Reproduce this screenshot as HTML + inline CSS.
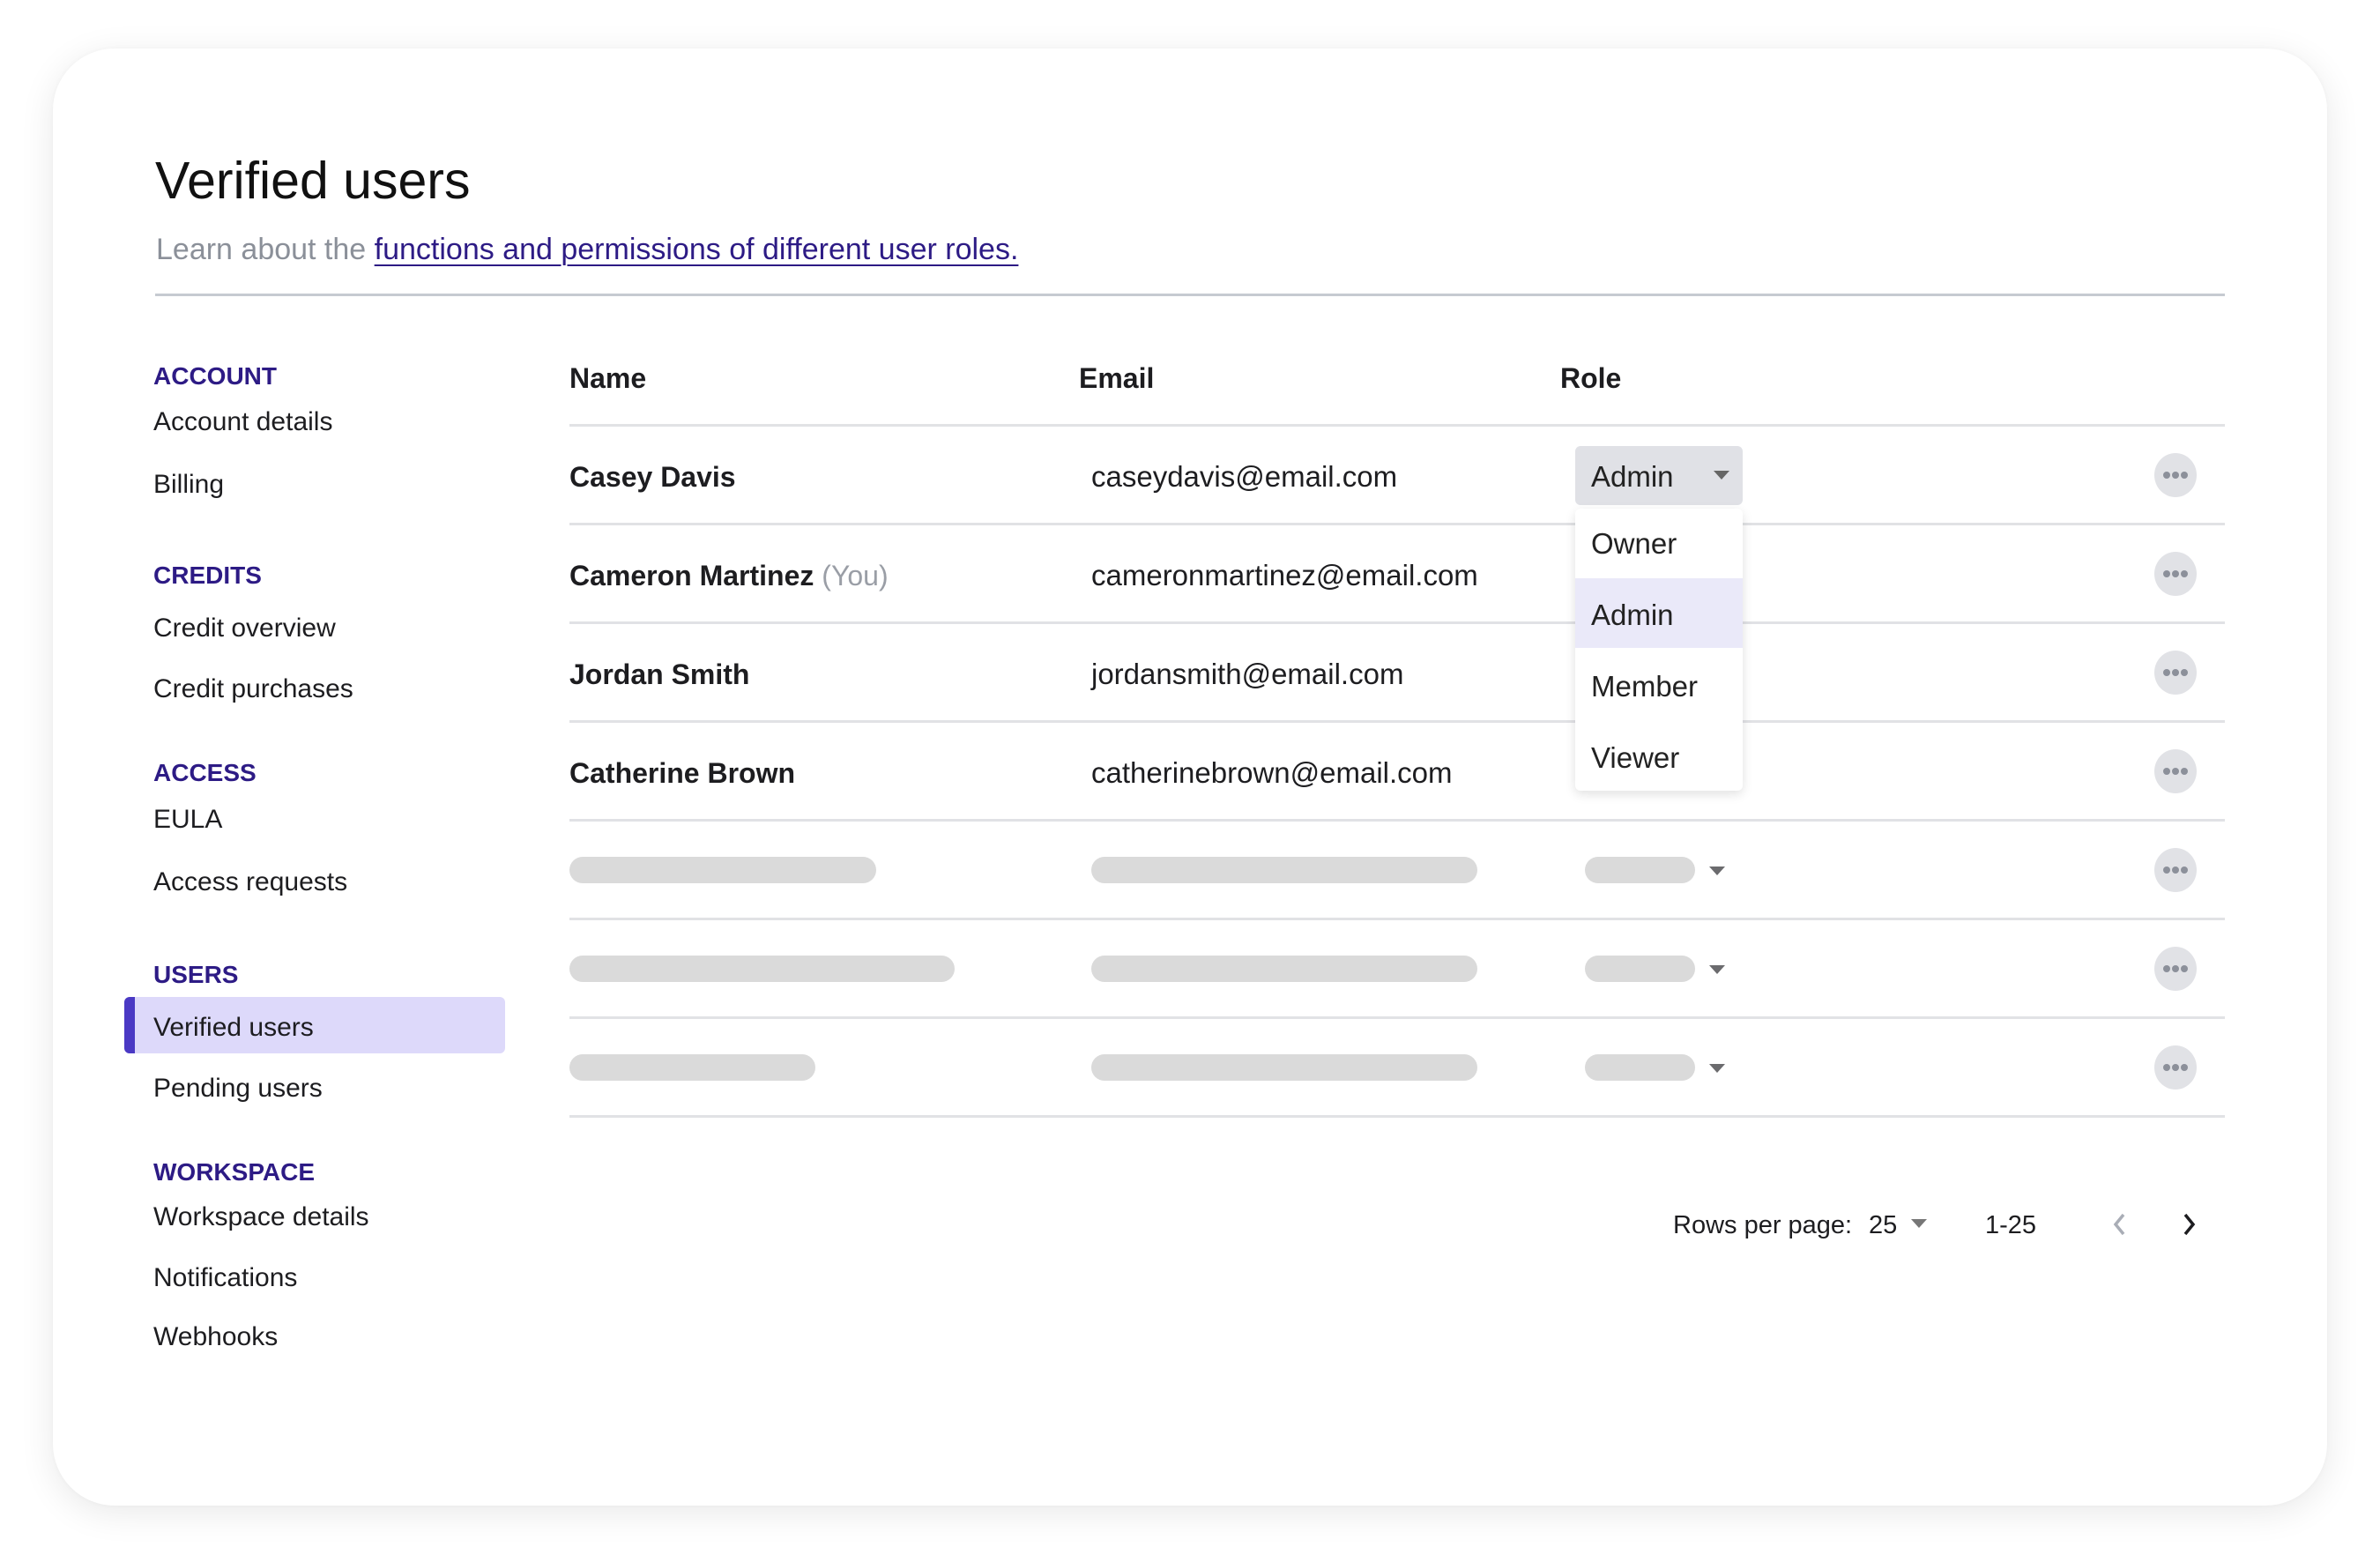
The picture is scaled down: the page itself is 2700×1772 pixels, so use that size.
<!DOCTYPE html>
<html><head><meta charset="utf-8">
<style>
*{margin:0;padding:0;box-sizing:border-box}
html,body{width:2700px;height:1772px;background:#fff;overflow:hidden}
body{font-family:"Liberation Sans",Arial,sans-serif;color:#1d1d20;position:relative}
.card{position:absolute;left:60px;top:55px;width:2580px;height:1653px;background:#fff;border-radius:70px;box-shadow:0 8px 40px rgba(0,0,0,.09),0 0 6px rgba(0,0,0,.03)}
.t{position:absolute;white-space:nowrap;line-height:40px;height:40px;margin-top:2px}
.sec{font-size:28px;font-weight:bold;color:#2d1b85}
.it{font-size:30px;color:#1d1d20}
.hd{font-size:32px;font-weight:bold}
.nm{font-size:32px;font-weight:bold}
.em{font-size:33px}
.line{position:absolute;left:646px;width:1878px;height:3px;background:#e1e2e5}
.dots{position:absolute;left:2444px;width:48px;height:50px;border-radius:50%;background:#e1e2e6}
.dots i{position:absolute;top:21px;width:8px;height:8px;border-radius:50%;background:#8c909a}
.sk{position:absolute;height:30px;border-radius:15px;background:#dadada}
.car{position:absolute;width:0;height:0;border-left:9px solid transparent;border-right:9px solid transparent;border-top:10px solid #6b6b6e}
</style></head><body>
<div class="card"></div>

<div class="t" style="left:176px;top:168px;font-size:59px;line-height:70px;height:70px;color:#111">Verified users</div>
<div class="t" style="left:177px;top:261px;font-size:34px;color:#8b9099">Learn about the <span style="color:#2d1b85;text-decoration:underline;text-decoration-thickness:2px;text-underline-offset:6px">functions and permissions of different user roles.</span></div>
<div style="position:absolute;left:176px;top:333px;width:2348px;height:3px;background:#c6cad1"></div>

<!-- sidebar -->
<div style="position:absolute;left:141px;top:1131px;width:432px;height:64px;background:#ddd9fa;border-radius:6px"></div>
<div style="position:absolute;left:141px;top:1131px;width:12px;height:64px;background:#4a39c4;border-radius:6px 0 0 6px"></div>
<div class="t sec" style="left:174px;top:405px">ACCOUNT</div>
<div class="t it" style="left:174px;top:457px">Account details</div>
<div class="t it" style="left:174px;top:528px">Billing</div>
<div class="t sec" style="left:174px;top:631px">CREDITS</div>
<div class="t it" style="left:174px;top:691px">Credit overview</div>
<div class="t it" style="left:174px;top:760px">Credit purchases</div>
<div class="t sec" style="left:174px;top:855px">ACCESS</div>
<div class="t it" style="left:174px;top:908px">EULA</div>
<div class="t it" style="left:174px;top:979px">Access requests</div>
<div class="t sec" style="left:174px;top:1084px">USERS</div>
<div class="t it" style="left:174px;top:1144px">Verified users</div>
<div class="t it" style="left:174px;top:1213px">Pending users</div>
<div class="t sec" style="left:174px;top:1308px">WORKSPACE</div>
<div class="t it" style="left:174px;top:1359px">Workspace details</div>
<div class="t it" style="left:174px;top:1428px">Notifications</div>
<div class="t it" style="left:174px;top:1495px">Webhooks</div>

<!-- table header -->
<div class="t hd" style="left:646px;top:407px">Name</div>
<div class="t hd" style="left:1224px;top:407px">Email</div>
<div class="t hd" style="left:1770px;top:407px">Role</div>

<div class="line" style="top:481px"></div>
<div class="line" style="top:593px"></div>
<div class="line" style="top:705px"></div>
<div class="line" style="top:817px"></div>
<div class="line" style="top:929px"></div>
<div class="line" style="top:1041px"></div>
<div class="line" style="top:1153px"></div>
<div class="line" style="top:1265px"></div>

<!-- rows -->
<div class="t nm" style="left:646px;top:519px">Casey Davis</div>
<div class="t em" style="left:1238px;top:519px">caseydavis@email.com</div>
<div class="t nm" style="left:646px;top:631px">Cameron Martinez <span style="font-weight:normal;color:#9a9ea6">(You)</span></div>
<div class="t em" style="left:1238px;top:631px">cameronmartinez@email.com</div>
<div class="t nm" style="left:646px;top:743px">Jordan Smith</div>
<div class="t em" style="left:1238px;top:743px">jordansmith@email.com</div>
<div class="t nm" style="left:646px;top:855px">Catherine Brown</div>
<div class="t em" style="left:1238px;top:855px">catherinebrown@email.com</div>

<!-- skeletons -->
<div class="sk" style="left:646px;top:972px;width:348px"></div>
<div class="sk" style="left:1238px;top:972px;width:438px"></div>
<div class="sk" style="left:1798px;top:972px;width:125px"></div>
<div class="car" style="left:1939px;top:983px"></div>
<div class="sk" style="left:646px;top:1084px;width:437px"></div>
<div class="sk" style="left:1238px;top:1084px;width:438px"></div>
<div class="sk" style="left:1798px;top:1084px;width:125px"></div>
<div class="car" style="left:1939px;top:1095px"></div>
<div class="sk" style="left:646px;top:1196px;width:279px"></div>
<div class="sk" style="left:1238px;top:1196px;width:438px"></div>
<div class="sk" style="left:1798px;top:1196px;width:125px"></div>
<div class="car" style="left:1939px;top:1207px"></div>

<!-- dots -->
<div class="dots" style="top:514px"><i style="left:10px"></i><i style="left:20px"></i><i style="left:30px"></i></div>
<div class="dots" style="top:626px"><i style="left:10px"></i><i style="left:20px"></i><i style="left:30px"></i></div>
<div class="dots" style="top:738px"><i style="left:10px"></i><i style="left:20px"></i><i style="left:30px"></i></div>
<div class="dots" style="top:850px"><i style="left:10px"></i><i style="left:20px"></i><i style="left:30px"></i></div>
<div class="dots" style="top:962px"><i style="left:10px"></i><i style="left:20px"></i><i style="left:30px"></i></div>
<div class="dots" style="top:1074px"><i style="left:10px"></i><i style="left:20px"></i><i style="left:30px"></i></div>
<div class="dots" style="top:1186px"><i style="left:10px"></i><i style="left:20px"></i><i style="left:30px"></i></div>

<!-- dropdown -->
<div style="position:absolute;left:1787px;top:506px;width:190px;height:67px;background:#e0e1e6;border-radius:6px"></div>
<div class="t em" style="left:1805px;top:519px;color:#222">Admin</div>
<div class="car" style="left:1944px;top:534px;border-top-color:#666"></div>
<div style="position:absolute;left:1787px;top:577px;width:190px;height:320px;background:#fff;border-radius:6px;box-shadow:0 4px 12px rgba(0,0,0,.12);overflow:hidden">
  <div style="position:absolute;left:0;top:79px;width:190px;height:79px;background:#eae9f9"></div>
</div>
<div class="t em" style="left:1805px;top:595px;color:#222">Owner</div>
<div class="t em" style="left:1805px;top:676px;color:#222">Admin</div>
<div class="t em" style="left:1805px;top:757px;color:#222">Member</div>
<div class="t em" style="left:1805px;top:838px;color:#222">Viewer</div>

<!-- pagination -->
<div class="t" style="left:1898px;top:1368px;font-size:29px">Rows per page:</div>
<div class="t" style="left:2120px;top:1368px;font-size:29px">25</div>
<div class="car" style="left:2168px;top:1383px;border-top-color:#777"></div>
<div class="t" style="left:2252px;top:1368px;font-size:29px">1-25</div>
<svg style="position:absolute;left:2394px;top:1374px" width="22" height="30" viewBox="0 0 22 30"><path d="M15 4 L6 15 L15 26" fill="none" stroke="#a9adb6" stroke-width="3.5"/></svg>
<svg style="position:absolute;left:2472px;top:1374px" width="22" height="30" viewBox="0 0 22 30"><path d="M7 4 L16 15 L7 26" fill="none" stroke="#1d1d20" stroke-width="3.5"/></svg>
</body></html>
